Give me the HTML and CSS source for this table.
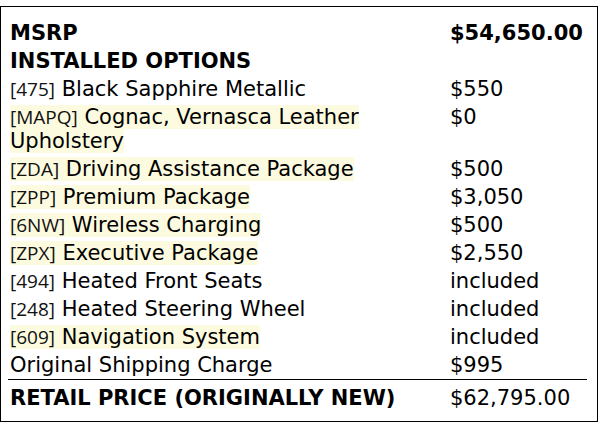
FILE: index.html
```html
<!DOCTYPE html>
<html>
<head>
<meta charset="utf-8">
<link rel="stylesheet" href="styles.css">
</head>
<body>
<div class="box">
  <table class="sticker">
    <tr class="head"><td class="desc">MSRP</td><td class="val">$54,650.00</td></tr>
    <tr class="head"><td class="desc" colspan="2">INSTALLED OPTIONS</td></tr>
    <tr><td class="desc"><span class="code">[475]</span> Black Sapphire Metallic</td><td class="val">$550</td></tr>
    <tr><td class="desc"><span class="hl"><span class="code">[MAPQ]</span> Cognac, Vernasca Leather Upholstery</span></td><td class="val">$0</td></tr>
    <tr><td class="desc"><span class="hl"><span class="code">[ZDA]</span> Driving Assistance Package</span></td><td class="val">$500</td></tr>
    <tr><td class="desc"><span class="hl"><span class="code">[ZPP]</span> Premium Package</span></td><td class="val">$3,050</td></tr>
    <tr><td class="desc"><span class="hl"><span class="code">[6NW]</span> Wireless Charging</span></td><td class="val">$500</td></tr>
    <tr><td class="desc"><span class="hl"><span class="code">[ZPX]</span> Executive Package</span></td><td class="val">$2,550</td></tr>
    <tr><td class="desc"><span class="code">[494]</span> Heated Front Seats</td><td class="val">included</td></tr>
    <tr><td class="desc"><span class="code">[248]</span> Heated Steering Wheel</td><td class="val">included</td></tr>
    <tr><td class="desc"><span class="hl"><span class="code">[609]</span> Navigation System</span></td><td class="val">included</td></tr>
    <tr><td class="desc">Original Shipping Charge</td><td class="val">$995</td></tr>
    <tr class="total"><td class="desc">RETAIL PRICE (ORIGINALLY NEW)</td><td class="val">$62,795.00</td></tr>
  </table>
</div>
</body>
</html>
```
FILE: styles.css
```css
html, body {
  margin: 0;
  padding: 0;
  background: #fff;
}
body {
  font-family: "DejaVu Sans", sans-serif;
  color: #000;
  font-size: 21px;
}
.box {
  box-sizing: border-box;
  width: 598px;
  height: 416px;
  margin-top: 6px;
  border: 1px solid #000;
  padding: 12px 10px 0 7px;
}
.sticker {
  border-collapse: collapse;
  width: 579px;
}
.sticker td {
  padding: 2px 2px;
  line-height: 24px;
  vertical-align: top;
}
.sticker td.desc {
  width: 438px;
  padding-right: 0;
}
.head td {
  font-weight: bold;
}
.code {
  font-family: "Open Sans", "DejaVu Sans", sans-serif;
  font-size: 19px;
  line-height: 17px;
  color: #111;
}
.hl {
  background: #fdfbdf;
}
.total td {
  border-top: 1px solid #000;
  padding-top: 6px;
}
.total td.desc {
  font-weight: bold;
}
```
